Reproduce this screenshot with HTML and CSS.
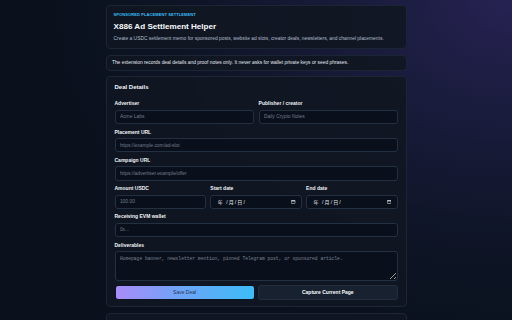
FILE: index.html
```html
<!DOCTYPE html>
<html lang="en">
<head>
  <meta charset="UTF-8" />
  <meta name="viewport" content="width=device-width, initial-scale=1" />
  <title>X886 Ad Settlement Helper</title>
  <link rel="stylesheet" href="styles.css">
</head>
<body>
  <main class="shell">
    <header class="card hero">
      <p class="eyebrow">Sponsored placement settlement</p>
      <h1>X886 Ad Settlement Helper</h1>
      <p class="lede">Create a USDC settlement memo for sponsored posts, website ad slots, creator deals, newsletters, and channel placements.</p>
    </header>

    <section class="card notice">
      The extension records deal details and proof notes only. It never asks for wallet private keys or seed phrases.
    </section>

    <section class="card deal">
      <h2>Deal Details</h2>
      <div class="row two">
        <label class="field">
          <span>Advertiser</span>
          <input type="text" placeholder="Acme Labs" />
        </label>
        <label class="field">
          <span>Publisher / creator</span>
          <input type="text" placeholder="Daily Crypto Notes" />
        </label>
      </div>
      <label class="field">
        <span>Placement URL</span>
        <input type="url" placeholder="https://example.com/ad-slot" />
      </label>
      <label class="field">
        <span>Campaign URL</span>
        <input type="url" placeholder="https://advertiser.example/offer" />
      </label>
      <div class="row three">
        <label class="field">
          <span>Amount USDC</span>
          <input type="text" placeholder="100.00" />
        </label>
        <div class="field">
          <span>Start date</span>
          <div class="date-box" tabindex="0">
            <em>年 /月/日/</em>
            <svg viewBox="0 0 9 8" width="4.4" height="3.8"><rect x="0.6" y="0.6" width="7.8" height="6.8" rx="0.8" fill="none" stroke="#d4d8de" stroke-width="1.2"/><rect x="0.6" y="0.6" width="7.8" height="2.4" fill="#d4d8de"/></svg>
          </div>
        </div>
        <div class="field">
          <span>End date</span>
          <div class="date-box" tabindex="0">
            <em>年 /月/日/</em>
            <svg viewBox="0 0 9 8" width="4.4" height="3.8"><rect x="0.6" y="0.6" width="7.8" height="6.8" rx="0.8" fill="none" stroke="#d4d8de" stroke-width="1.2"/><rect x="0.6" y="0.6" width="7.8" height="2.4" fill="#d4d8de"/></svg>
          </div>
        </div>
      </div>
      <label class="field">
        <span>Receiving EVM wallet</span>
        <input type="text" placeholder="0x..." />
      </label>
      <label class="field">
        <span>Deliverables</span>
        <textarea placeholder="Homepage banner, newsletter mention, pinned Telegram post, or sponsored article."></textarea>
      </label>
      <div class="actions">
        <button class="btn primary">Save Deal</button>
        <button class="btn secondary">Capture Current Page</button>
      </div>
    </section>

    <section class="card proof"></section>
  </main>
</body>
</html>
```

FILE: styles.css
```css
html, body {
  margin: 0;
  min-height: 100%;
}
body {
  font-family: "Liberation Sans", Arial, sans-serif;
  color: #e5e9f0;
  background: radial-gradient(ellipse 95% 110% at 100% 0%, #262252 0%, #181b3a 35%, #0d1424 70%, #0a111c 100%);
  background-color: #0a111c;
  min-height: 320px;
}

/* page column */
.shell {
  width: 301px;
  margin: 0 auto;
  padding-top: 5.3px;
  display: flex;
  flex-direction: column;
  gap: 5.4px;
}

.card {
  background: rgba(16, 23, 34, 0.92);
  border: 1px solid #1c2534;
  border-radius: 4px;
  box-sizing: border-box;
}

/* header card */
.hero {
  padding: 6px 7px 6px;
}
.eyebrow {
  margin: 0;
  font-size: 4px;
  line-height: 5px;
  font-weight: 700;
  letter-spacing: 0.1px;
  text-transform: uppercase;
  color: #38bdf8;
}
.hero h1 {
  margin: 5px 0 0;
  font-size: 8.1px;
  line-height: 10px;
  font-weight: 700;
  color: #f8fafc;
}
.lede {
  margin: 4px 0 0;
  font-size: 4.9px;
  line-height: 6px;
  color: #b0bccc;
}

.notice {
  padding: 4px 5.4px;
  font-size: 4.9px;
  line-height: 6px;
  color: #e2e8f0;
}

/* deal form */
.deal {
  padding: 7px 7.6px 6.5px 8px;
  display: flex;
  flex-direction: column;
  gap: 4.6px;
}
.deal h2 {
  margin: 0 0 4.7px;
  font-size: 6px;
  line-height: 7px;
  font-weight: 700;
  color: #f1f5f9;
}
.row {
  display: grid;
  gap: 4.7px;
}
.row.two {
  grid-template-columns: 1fr 1fr;
}
.row.three {
  grid-template-columns: 1fr 1fr 1fr;
  gap: 4px;
}
.field {
  display: flex;
  flex-direction: column;
  gap: 3.3px;
}
.field span {
  font-size: 5px;
  line-height: 6px;
  font-weight: 700;
  color: #eef2f6;
}
.field input,
.field textarea,
.date-box {
  box-sizing: border-box;
  width: 100%;
  height: 14.4px;
  padding: 0 4.4px;
  margin: 0;
  border: 1px solid #233042;
  border-radius: 3px;
  background: #0a101b;
  color: #e5e7eb;
  font-family: "Liberation Sans", Arial, sans-serif;
  font-size: 4.9px;
  outline: none;
}
.field input::placeholder {
  color: #717b8b;
}

/* date picker look-alike */
.date-box {
  display: flex;
  align-items: center;
  justify-content: space-between;
  padding: 0 5.6px 0 6.4px;
}
.date-box em {
  font-style: normal;
  font-family: "Liberation Sans", "Noto Sans CJK SC", sans-serif;
  font-size: 5px;
  letter-spacing: 1.1px;
  color: #e8ebf0;
}
.date-box svg {
  display: block;
}

.field textarea {
  height: 30.2px;
  padding: 4px 4.4px;
  font-family: "Liberation Mono", "Courier New", monospace;
  font-size: 4.65px;
  line-height: 6px;
  resize: vertical;
}
.field textarea::placeholder {
  color: #7a8494;
}

.actions {
  display: grid;
  grid-template-columns: 1fr 1fr;
  gap: 3px;
  margin-top: -0.8px;
}
.btn {
  height: 14.7px;
  border-radius: 3px;
  font-family: "Liberation Sans", Arial, sans-serif;
  font-size: 5px;
  cursor: pointer;
  padding: 0;
}
.primary {
  background: linear-gradient(90deg, #a88cf8 0%, #6aa6f7 50%, #3cbcf8 100%);
  border: 1px solid #0c1322;
  color: #2a3550;
}
.secondary {
  background: #172130;
  border: 1px solid #222e40;
  color: #f8fafc;
  font-weight: 700;
}

.proof {
  height: 20px;
}
```
